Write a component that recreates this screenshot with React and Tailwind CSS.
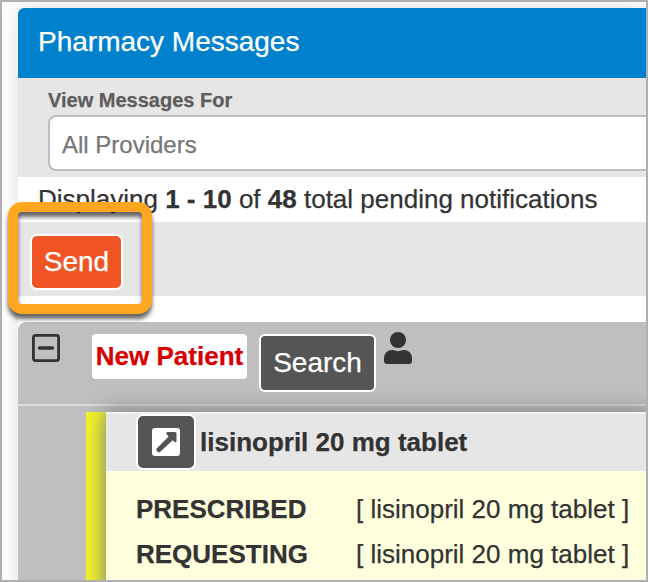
import React from "react";

function CollapseIcon() {
  return (
    <svg className="block h-7 w-7" viewBox="0 0 28 28" fill="none">
      <rect x="1.4" y="1.4" width="25.2" height="25.2" rx="2" stroke="#333" strokeWidth="2.8" />
      <path d="M7.5 14H20.5" stroke="#333" strokeWidth="3.4" strokeLinecap="round" />
    </svg>
  );
}

function PersonIcon() {
  return (
    <svg className="block h-8 w-7" viewBox="0 0 28 32" fill="#333">
      <circle cx="14" cy="8" r="8" />
      <path d="M8 18H9.1a11.5 11.5 0 0 0 9.8 0H20a8 8 0 0 1 8 8v3a3 3 0 0 1-3 3H3a3 3 0 0 1-3-3v-3a8 8 0 0 1 8-8Z" />
    </svg>
  );
}

function OpenIcon() {
  return (
    <svg className="block h-7 w-7" viewBox="0 0 28 28">
      <rect width="28" height="28" rx="3" fill="#fff" />
      <path
        d="M15.3 4H23Q24.5 4 24.5 5.5V13Q24.3 14.8 22.7 14L20.8 12.2L8 24Q7 25 6 24L4.6 22.6Q3.6 21.6 4.6 20.6L16.6 8.4L14.5 6.2Q13.6 4.4 15.3 4Z"
        fill="#555"
      />
    </svg>
  );
}

function DetailRow({ label, value }) {
  return (
    <div className="flex h-[45px] items-center">
      <span className="w-[220px] font-bold">{label}</span>
      <span>{value}</span>
    </div>
  );
}

function MessageCard() {
  return (
    <div className="ml-[68px] flex h-[200px] bg-[#f4f722]">
      <div className="w-5 shrink-0" />
      <div className="min-w-0 flex-1 shadow-[1px_1px_20px_3px_#808080]">
        <div className="flex h-[59px] items-center border-t-2 border-[#f2f2f2] bg-[#e6e6e6] pb-[2px] pl-[30px] font-bold">
          <button className="flex h-[56px] w-[60px] shrink-0 items-center justify-center rounded-[7px] border-2 border-white bg-[#555]">
            <OpenIcon />
          </button>
          <span className="ml-1">lisinopril 20 mg tablet</span>
        </div>
        <div className="h-[141px] bg-[#ffffdd] pt-[15px] pl-[30px]">
          <DetailRow label="PRESCRIBED" value="[ lisinopril 20 mg tablet ]" />
          <DetailRow label="REQUESTING" value="[ lisinopril 20 mg tablet ]" />
        </div>
      </div>
    </div>
  );
}

export default function App() {
  return (
    <div
      className="relative h-[582px] w-[648px] overflow-hidden border-2 border-[#b0b0b0] bg-white pt-[6px] pl-4 text-[26px] leading-[30px] whitespace-nowrap text-[#333] [-webkit-text-stroke:0.25px]"
      style={{ fontFamily: '"Liberation Sans", Arial, sans-serif' }}
    >
      <div className="h-[600px] rounded-tl-[6px] bg-white shadow-[0_0_20px_rgba(0,0,0,0.14)]">
        <h1 className="flex h-[70px] items-center rounded-tl-[6px] bg-[#0081cd] pb-[2px] pl-5 text-[28px] text-white">
          Pharmacy Messages
        </h1>
        <div className="h-[99px] bg-[#e6e6e6] pt-[11px] pl-[30px]">
          <div className="h-[26px] text-[20px] leading-[23px] font-bold text-[#5d5d5d]">View Messages For</div>
          <div className="flex h-14 items-center rounded-l-[8px] border-2 border-r-0 border-[#bdbdbd] bg-white pt-[3px] pl-3 text-[24px] text-[#777]">
            All Providers
          </div>
        </div>
        <div className="flex h-[45px] items-center pb-[2px] pl-5">
          <p>
            Displaying <b>1 - 10</b> of <b>48</b> total pending notifications
          </p>
        </div>
        <div className="h-[74px] bg-[#e6e6e6] pt-3 pl-3">
          <button className="flex h-14 w-[93px] items-center justify-center rounded-[7px] border-2 border-white bg-[#f15524] text-[28px] text-white">
            Send
          </button>
        </div>
        <div className="mt-[26px] h-[290px] rounded-tl-[8px] bg-[#bfbfbf]">
          <div className="flex h-[84px] items-start border-b-2 border-[#dcdcdc] pt-3 pl-[14px]">
            <CollapseIcon />
            <div className="ml-8 flex h-[45px] w-[155px] items-center justify-center rounded-[4px] bg-white pb-[2px] font-bold text-[#d60000]">
              New Patient
            </div>
            <button className="ml-3 flex h-[58px] w-[117px] items-center justify-center rounded-[6px] border-2 border-white bg-[#555] text-[28px] text-white">
              Search
            </button>
            <div className="-mt-[2px] ml-2">
              <PersonIcon />
            </div>
          </div>
          <div className="pt-[6px]">
            <MessageCard />
          </div>
        </div>
      </div>
      <div className="absolute top-[200px] left-[6px] h-[112px] w-[144px] rounded-[14px] border-10 border-[#ffa620] drop-shadow-[0_5px_2px_rgba(0,0,0,0.6)]" />
    </div>
  );
}
